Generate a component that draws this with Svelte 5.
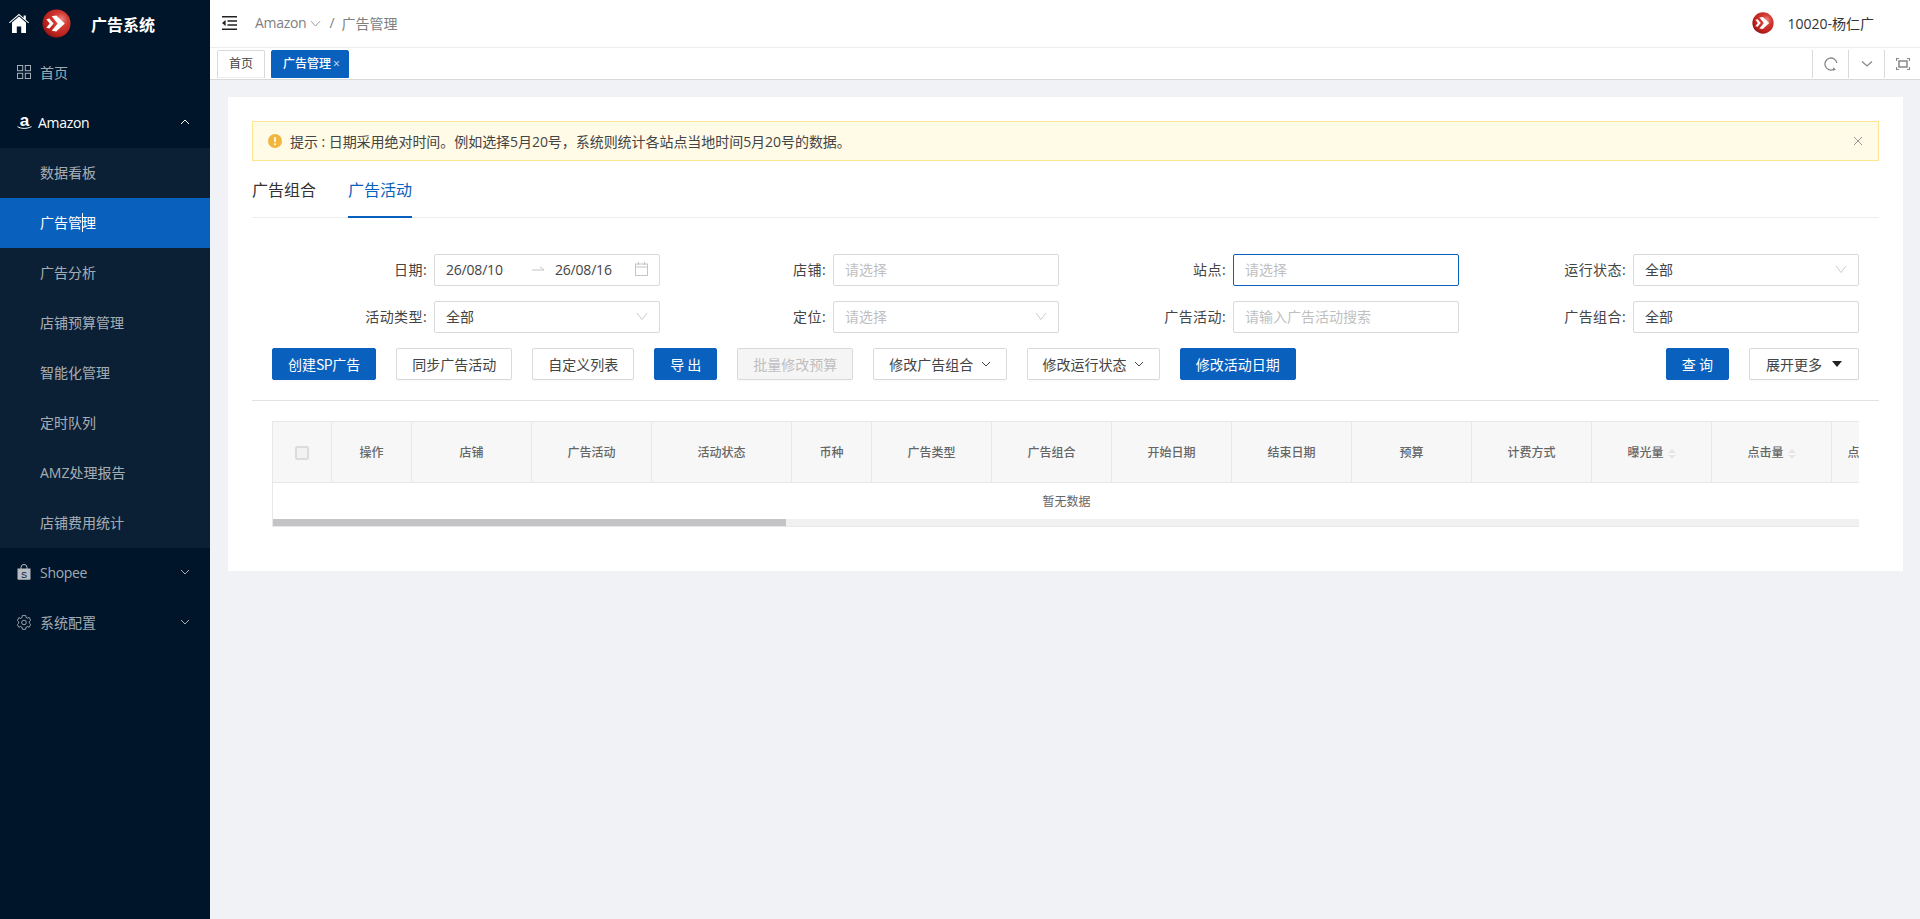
<script lang="ts">
  const subMenu = ['数据看板', '广告管理', '广告分析', '店铺预算管理', '智能化管理', '定时队列', 'AMZ处理报告', '店铺费用统计'];
  const activeSub = '广告管理';

  const columns = [
    { title: '操作', width: 80 },
    { title: '店铺', width: 120 },
    { title: '广告活动', width: 120 },
    { title: '活动状态', width: 140 },
    { title: '币种', width: 80 },
    { title: '广告类型', width: 120 },
    { title: '广告组合', width: 120 },
    { title: '开始日期', width: 120 },
    { title: '结束日期', width: 120 },
    { title: '预算', width: 120 },
    { title: '计费方式', width: 120 },
    { title: '曝光量', width: 120, sort: true },
    { title: '点击量', width: 120, sort: true },
    { title: '点击率', width: 80, sort: true },
  ];
</script>

{#snippet logo(size)}
  <svg class="logo" width={size} height={size} viewBox="0 0 30 30">
    <defs>
      <radialGradient id="ball-{size}" cx="0.66" cy="0.36" r="0.72">
        <stop offset="0" stop-color="#ee8a84" />
        <stop offset="0.35" stop-color="#d23a33" />
        <stop offset="0.75" stop-color="#bf221d" />
        <stop offset="1" stop-color="#8f1512" />
      </radialGradient>
    </defs>
    <circle cx="15" cy="15" r="14.5" fill="url(#ball-{size})" />
    <path d="M4.5 10.5L7.6 9.8 12 15l-4.4 5.2-3.1-.7L8 15zM10 7.6l4.8-.8L23.5 15l-8.7 8.2-4.8-.8L16.2 15z" fill="#fff" />
  </svg>
{/snippet}

{#snippet chevron(up)}
  <svg class="chev" class:up width="10" height="10" viewBox="0 0 10 10">
    <path d="M1 3l4 4 4-4" fill="none" stroke="currentColor" stroke-width="1" />
  </svg>
{/snippet}

{#snippet selectArrow()}
  <svg class="select-arrow" width="12" height="12" viewBox="0 0 12 12">
    <path d="M1 3l5 6.5L11 3" fill="none" stroke="#c4c4c4" stroke-width="0.9" />
  </svg>
{/snippet}

<div class="app">
  <aside class="sidebar">
    <div class="brand">
      <svg class="home" width="20" height="20" viewBox="0 0 20 20">
        <path d="M10 0.8L0 9.6l.6.7L10 2.3l9.4 8 .6-.7-3.2-2.8V2.6h-2.2v2.3z" fill="#fff" />
        <path d="M10 3.6l-7 6V20h4.8v-6.4h4.4V20H17V9.6z" fill="#fff" />
      </svg>
      {@render logo(29)}
      <span class="brand-name">广告系统</span>
    </div>

    <div class="item">
      <svg class="icon" width="14" height="14" viewBox="0 0 14 14" fill="none" stroke="currentColor">
        <rect x="0.5" y="0.5" width="5.2" height="5.2" />
        <rect x="8.3" y="0.5" width="5.2" height="5.2" />
        <rect x="0.5" y="8.3" width="5.2" height="5.2" />
        <rect x="8.3" y="8.3" width="5.2" height="5.2" />
      </svg>
      <span>首页</span>
    </div>

    <div class="item open">
      <svg class="icon amazon" width="15" height="24" viewBox="0 -4 15 24">
        <text x="7.5" y="11.5" text-anchor="middle" class="amazon-a">a</text>
        <path d="M0.5 12.6c3.5 2.4 9.5 2.4 14 0" fill="none" stroke="currentColor" stroke-width="1" />
      </svg>
      <span class="latin">Amazon</span>
      {@render chevron(true)}
    </div>

    <div class="submenu">
      {#each subMenu as name}
        <div class="sub-item" class:active={name === activeSub}>
          <span class="sub-label">
            {name}
            {#if name === activeSub}<i class="caret"></i>{/if}
          </span>
        </div>
      {/each}
    </div>

    <div class="item">
      <svg class="icon" width="14" height="16" viewBox="0 0 14 16">
        <path d="M0.5 4.5h13l0 10.5a.8.8 0 0 1-.8.8H1.3a.8.8 0 0 1-.8-.8z" fill="#b9bdc3" />
        <path d="M4 5V3.5a3 3 0 0 1 6 0V5" fill="none" stroke="#b9bdc3" />
        <text x="7" y="13.8" text-anchor="middle" class="shopee-s">S</text>
      </svg>
      <span class="latin">Shopee</span>
      {@render chevron(false)}
    </div>

    <div class="item">
      <svg class="icon" width="14" height="15" viewBox="0 0 14 15" fill="none" stroke="currentColor" stroke-width="0.9">
        <path d="M5.4.8h3.2l.4 2 1.3.7 1.9-.6 1.5 2.8-1.4 1.3v1.5l1.4 1.3-1.5 2.8-1.9-.6-1.3.7-.4 2H5.4l-.4-2-1.3-.7-1.9.6L.3 10l1.4-1.3V7.2L.3 5.9l1.5-2.8 1.9.6L5 3z" transform="translate(0 -.4)" />
        <circle cx="7" cy="7.5" r="2.3" />
      </svg>
      <span>系统配置</span>
      {@render chevron(false)}
    </div>
  </aside>

  <div class="right">
    <header class="topbar">
      <svg class="collapse" width="15" height="14" viewBox="0 0 15 14">
        <path d="M0 .8h15M5.5 5h9.5M5.5 9h9.5M0 13.2h15" stroke="#222" stroke-width="1.5" />
        <path d="M3.6 4L0 7l3.6 3z" fill="#222" />
      </svg>
      <nav class="crumbs">
        <span class="crumb latin-crumb">Amazon</span>
        <svg width="11" height="11" viewBox="0 0 11 11"><path d="M1 3.2l4.5 4.8L10 3.2" fill="none" stroke="#999" /></svg>
        <span class="sep">/</span>
        <span class="crumb">广告管理</span>
      </nav>
      <div class="user">
        {@render logo(22)}
        <span>10020-杨仁广</span>
      </div>
    </header>

    <div class="tagbar">
      <div class="tag">首页</div>
      <div class="tag current">广告管理<span class="tag-x">×</span></div>
      <div class="tag-tools">
        <div class="tool">
          <svg width="14" height="14" viewBox="0 0 14 14">
            <path d="M12.9 6A6 6 0 1 0 9.2 12.6" fill="none" stroke="#888" stroke-width="1.3" />
            <path d="M9 10.2l3 2.2-3 1.4z" fill="#888" />
          </svg>
        </div>
        <div class="tool">
          <svg width="12" height="12" viewBox="0 0 12 12"><path d="M1 3.5l5 4.5 5-4.5" fill="none" stroke="#888" stroke-width="1.3" /></svg>
        </div>
        <div class="tool">
          <svg width="14" height="12" viewBox="0 0 14 12" fill="none" stroke="#888">
            <path d="M.5 3V.5H3M11 .5h2.5V3M13.5 9v2.5H11M3 11.5H.5V9" stroke-width="1.2" />
            <rect x="3" y="3" width="8" height="6" stroke-width="1.5" />
          </svg>
        </div>
      </div>
    </div>

    <main class="main">
      <section class="card">
        <div class="alert">
          <svg class="alert-icon" width="14" height="14" viewBox="0 0 14 14">
            <circle cx="7" cy="7" r="7" fill="#f2b63f" />
            <rect x="6.1" y="3" width="1.8" height="5.2" rx="0.9" fill="#fff" />
            <circle cx="7" cy="10.2" r="1" fill="#fff" />
          </svg>
          <span class="alert-text">提示 : 日期采用绝对时间。例如选择5月20号，系统则统计各站点当地时间5月20号的数据。</span>
          <svg class="alert-close" width="10" height="10" viewBox="0 0 10 10"><path d="M1 1l8 8M9 1l-8 8" stroke="#999" /></svg>
        </div>

        <div class="tabs">
          <div class="tab">广告组合</div>
          <div class="tab on">广告活动</div>
        </div>

        <div class="form">
          <div class="field">
            <label>日期:</label>
            <div class="control date">
              <span class="d1">26/08/10</span>
              <svg class="range-arrow" width="13" height="8" viewBox="0 0 13 8"><path d="M0 5h12L8 2" fill="none" stroke="#c4c4c4" /></svg>
              <span class="d2">26/08/16</span>
              <svg class="cal" width="13" height="14" viewBox="0 0 13 14" fill="none" stroke="#c4c4c4">
                <rect x="0.5" y="2" width="12" height="11.5" />
                <path d="M.5 5h12M3.5 0v3M9.5 0v3" />
              </svg>
            </div>
          </div>
          <div class="field">
            <label>店铺:</label>
            <div class="control placeholder">请选择</div>
          </div>
          <div class="field">
            <label>站点:</label>
            <div class="control placeholder focus">请选择</div>
          </div>
          <div class="field">
            <label>运行状态:</label>
            <div class="control">全部{@render selectArrow()}</div>
          </div>
          <div class="field">
            <label>活动类型:</label>
            <div class="control">全部{@render selectArrow()}</div>
          </div>
          <div class="field">
            <label>定位:</label>
            <div class="control placeholder">请选择{@render selectArrow()}</div>
          </div>
          <div class="field">
            <label>广告活动:</label>
            <div class="control placeholder">请输入广告活动搜索</div>
          </div>
          <div class="field">
            <label>广告组合:</label>
            <div class="control">全部</div>
          </div>
        </div>

        <div class="actions">
          <button class="btn primary">创建<span class="tight">SP</span>广告</button>
          <button class="btn">同步广告活动</button>
          <button class="btn">自定义列表</button>
          <button class="btn primary">导 出</button>
          <button class="btn disabled">批量修改预算</button>
          <button class="btn">修改广告组合 {@render chevron(false)}</button>
          <button class="btn">修改运行状态 {@render chevron(false)}</button>
          <button class="btn primary">修改活动日期</button>
          <div class="spacer"></div>
          <button class="btn primary">查 询</button>
          <button class="btn more">展开更多<i class="tri"></i></button>
        </div>

        <div class="divider"></div>

        <div class="table-wrap">
          <div class="table-clip">
            <table>
              <thead>
                <tr>
                  <th class="check-cell"><i class="check"></i></th>
                  {#each columns as col}
                    <th style="width: {col.width}px">
                      <span class="th-inner">
                        {col.title}
                        {#if col.sort}
                          <span class="sorter"><i class="s-up"></i><i class="s-down"></i></span>
                        {/if}
                      </span>
                    </th>
                  {/each}
                </tr>
              </thead>
              <tbody>
                <tr><td class="empty" colspan="15"><span class="empty-text">暂无数据</span></td></tr>
              </tbody>
            </table>
          </div>
          <div class="scrollbar"><div class="thumb"></div></div>
        </div>
      </section>
    </main>
  </div>
</div>

<style>
  :global(body) {
    margin: 0;
    background: #f0f2f5;
    font-family: 'Open Sans', 'Noto Sans CJK SC', sans-serif;
    font-size: 14px;
    color: #333;
  }

  .app {
    display: flex;
    min-height: 919px;
  }

  /* sidebar */
  .sidebar {
    width: 210px;
    flex: none;
    background: #00152a;
    color: rgba(255, 255, 255, 0.65);
  }

  .brand {
    display: flex;
    align-items: center;
    height: 48px;
    padding-left: 9px;
  }

  .brand .logo {
    margin-left: 13px;
    margin-top: -2px;
  }

  .home {
    margin-top: -2px;
  }

  .brand-name {
    margin-left: 20px;
    font-size: 16px;
    font-weight: 700;
    color: #fff;
  }

  .item {
    display: flex;
    align-items: center;
    height: 50px;
    box-sizing: border-box;
    padding: 0 0 2px 17px;
    position: relative;
  }

  .item .icon {
    margin-right: 9px;
    flex: none;
  }

  .item.open {
    color: #fff;
  }

  .item .icon.amazon {
    margin-right: 6px;
  }

  .amazon-a {
    font-family: 'Liberation Sans', sans-serif;
    font-weight: 700;
    font-size: 17px;
    fill: currentColor;
  }

  .shopee-s {
    font-family: 'Liberation Sans', sans-serif;
    font-size: 9px;
    fill: #00152a;
  }

  .latin {
    letter-spacing: -0.3px;
  }

  .item .chev {
    margin-left: auto;
    margin-right: 20px;
  }

  .chev.up {
    transform: rotate(180deg);
  }

  .submenu {
    background: #0c2035;
  }

  .sub-item {
    height: 50px;
    box-sizing: border-box;
    display: flex;
    align-items: center;
    padding: 0 0 2px 40px;
  }

  .sub-item.active {
    background: #0a60bd;
    color: #fff;
  }

  .sub-label {
    position: relative;
  }

  .caret {
    position: absolute;
    left: 42px;
    top: 1px;
    width: 1px;
    height: 19px;
    background: #fff;
  }

  /* top */
  .right {
    flex: 1;
    min-width: 0;
  }

  .topbar {
    display: flex;
    align-items: center;
    height: 47px;
    background: #fff;
    border-bottom: 1px solid #eee;
    padding-left: 12px;
  }

  .collapse {
    margin-top: -1px;
  }

  .crumbs {
    display: flex;
    align-items: center;
    margin-left: 18px;
    margin-top: -2px;
    color: #808080;
  }

  .latin-crumb {
    letter-spacing: -0.3px;
  }

  .crumbs svg {
    margin-left: 4px;
    margin-top: 2px;
  }

  .sep {
    margin: 0 7px 0 8px;
  }

  .user {
    display: flex;
    align-items: center;
    gap: 13px;
    margin-left: auto;
    margin-right: 46px;
    margin-top: -2px;
    color: #333;
  }

  .tagbar {
    display: flex;
    align-items: flex-start;
    height: 29px;
    padding: 2px 0 0 7px;
    background: #fff;
    border-bottom: 1px solid #d9d9d9;
    gap: 6px;
  }

  .tag {
    height: 28px;
    line-height: 26px;
    box-sizing: border-box;
    padding: 0 11px;
    font-size: 12px;
    border: 1px solid #d9d9d9;
    border-bottom-color: #eee;
    border-radius: 2px 2px 0 0;
    color: #444;
  }

  .tag.current {
    background: #0a60bd;
    border-color: #0a60bd;
    color: #fff;
    padding: 0 8px 0 11px;
    font-weight: 500;
  }

  .tag-x {
    margin-left: 2px;
    font-weight: 400;
    color: #d5e4f5;
  }

  .tag-tools {
    display: flex;
    margin-left: auto;
  }

  .tool {
    width: 36px;
    height: 28px;
    box-sizing: border-box;
    border-left: 1px solid #d9d9d9;
    display: flex;
    align-items: center;
    justify-content: center;
  }

  .main {
    padding: 17px 17px 0 18px;
  }

  /* card */
  .card {
    background: #fff;
    padding: 24px 24px 44px;
  }

  .alert {
    display: flex;
    align-items: center;
    height: 40px;
    box-sizing: border-box;
    background: #fffbe6;
    border: 1px solid #ffe58f;
    padding: 0 15px;
    color: #444;
  }

  .alert-icon {
    margin-right: 8px;
    flex: none;
  }

  .alert-text {
    letter-spacing: -0.05px;
  }

  .alert-close {
    margin-left: auto;
  }

  .tabs {
    display: flex;
    gap: 32px;
    margin-top: 10px;
    border-bottom: 1px solid #eee;
    font-size: 16px;
    color: #333;
  }

  .tab {
    padding: 7px 0 15px;
    line-height: 24px;
    position: relative;
  }

  .tab.on {
    color: #0a60bd;
  }

  .tab.on::after {
    content: '';
    position: absolute;
    left: 0;
    right: 0;
    bottom: -1px;
    height: 2px;
    background: #0a60bd;
  }

  /* filter form */
  .form {
    display: grid;
    grid-template-columns: 400px 399px 400px 400px;
    row-gap: 15px;
    margin: 36px 20px 0 8px;
  }

  .field {
    display: flex;
    align-items: center;
    justify-content: flex-end;
  }

  .field label {
    margin: 0 7px 2px 0;
    letter-spacing: 0.4px;
    color: #444;
  }

  .control {
    position: relative;
    display: flex;
    align-items: center;
    width: 226px;
    height: 32px;
    box-sizing: border-box;
    padding: 0 11px 2px;
    border: 1px solid #d9d9d9;
    border-radius: 2px;
    color: #444;
  }

  .control.placeholder {
    color: #bfbfbf;
  }

  .control.focus {
    border-color: #0a60bd;
  }

  .select-arrow {
    margin-left: auto;
  }

  .d1,
  .d2 {
    letter-spacing: -0.2px;
  }

  .d1 {
    width: 57px;
  }

  .range-arrow {
    margin-left: 29px;
  }

  .d2 {
    margin-left: 10px;
  }

  .cal {
    margin-left: auto;
  }

  .actions {
    display: flex;
    gap: 20px;
    margin: 15px 20px 0;
  }

  .spacer {
    flex: 1;
    margin-left: -20px;
  }

  .btn {
    height: 32px;
    padding: 0 15px;
    font-family: 'Noto Sans CJK SC', sans-serif;
    font-size: 14px;
    color: #444;
    background: #fff;
    border: 1px solid #d9d9d9;
    border-radius: 2px;
    box-shadow: 0 2px 0 rgba(0, 0, 0, 0.015);
    display: flex;
    align-items: center;
    white-space: pre;
  }

  .tight {
    letter-spacing: -0.5px;
  }

  .btn.primary {
    background: #0a60bd;
    border-color: #0a60bd;
    color: #fff;
  }

  .btn.disabled {
    background: #f5f5f5;
    color: #bfbfbf;
  }

  .btn .chev {
    margin-left: 4px;
  }

  .btn.more {
    padding: 0 16px;
  }

  .tri {
    margin-left: 10px;
    border-left: 5px solid transparent;
    border-right: 5px solid transparent;
    border-top: 6px solid #222;
  }

  .divider {
    height: 1px;
    background: #e2e2e2;
    margin: 20px 0;
  }

  /* table */
  .table-wrap {
    margin: 0 20px;
    border-bottom: 1px solid #e8e8e8;
  }

  .table-clip {
    overflow: hidden;
  }

  table {
    border-collapse: separate;
    border-spacing: 0;
    table-layout: fixed;
    width: 1639px;
  }

  th {
    height: 62px;
    box-sizing: border-box;
    padding: 0;
    background: #f7f7f7;
    border-top: 1px solid #e8e8e8;
    border-bottom: 1px solid #e8e8e8;
    border-left: 1px solid #e8e8e8;
    font-size: 12px;
    font-weight: 500;
    color: #666;
    white-space: nowrap;
  }

  .check-cell {
    width: 59px;
  }

  .check {
    display: inline-block;
    width: 14px;
    height: 14px;
    box-sizing: border-box;
    border: 2px solid #dcdcdc;
    background: #f2f2f2;
    border-radius: 2px;
    vertical-align: middle;
  }

  .th-inner {
    display: inline-flex;
    align-items: center;
    gap: 4px;
  }

  .sorter {
    display: inline-flex;
    flex-direction: column;
    gap: 2px;
    margin-top: 3px;
  }

  .s-up {
    border-left: 4px solid transparent;
    border-right: 4px solid transparent;
    border-bottom: 4px solid #e6e6e6;
  }

  .s-down {
    border-left: 4px solid transparent;
    border-right: 4px solid transparent;
    border-top: 4px solid #e6e6e6;
  }

  .empty {
    height: 36px;
    padding: 0;
    border-left: 1px solid #e8e8e8;
    font-size: 12px;
    color: #666;
  }

  .empty-text {
    display: block;
    width: 1587px;
    text-align: center;
  }

  .scrollbar {
    height: 7px;
    background: #f1f1f1;
    border-left: 1px solid #e8e8e8;
  }

  .thumb {
    width: 513px;
    height: 100%;
    background: #c4c4c6;
  }
</style>
